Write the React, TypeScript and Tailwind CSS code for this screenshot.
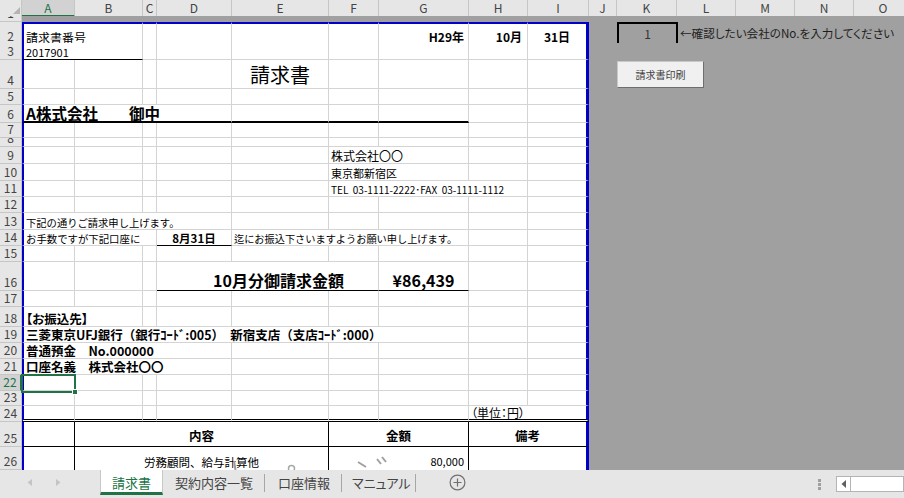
import React from "react";

type BT = "g" | "n" | "k" | "k2" | "dbl";
type RT = "g" | "n" | "k";
interface Spec {
  s?: number;
  r?: RT;
  b?: BT;
  t?: string;
  cls?: string;
  c?: React.ReactNode;
  sel?: boolean;
}

const SPAN: Record<number, string> = {
  1: "",
  2: "col-span-2",
  3: "col-span-3",
  4: "col-span-4",
  5: "col-span-5",
  6: "col-span-6",
  7: "col-span-7",
  8: "col-span-8",
  9: "col-span-9",
};
const RCL: Record<string, string> = {
  g: "border-r border-r-[#d4d4d4]",
  n: "",
  k: "border-r border-r-black",
  blue: "border-r-[3px] border-r-[#0000c8]",
};
const BCL: Record<string, string> = {
  g: "border-b border-b-[#d4d4d4]",
  n: "",
  k: "border-b border-b-black",
  k2: "border-b-2 border-b-black",
  dbl: "border-b-[3px] border-b-black [border-bottom-style:double]",
};

const GRID =
  "grid grid-cols-[22px_53px_68px_14px_75px_97px_50px_90px_59px_61px_28px_60px_59px_59px_59px_59px]";

const e = (n: number, extra: Spec = {}): Spec[] =>
  Array.from({ length: n }, () => ({ ...extra }));

function RowHead({ n, sel }: { n: number; sel?: boolean }) {
  return (
    <div
      className={
        sel
          ? "flex items-end justify-center overflow-hidden border-b border-b-[#c6c6c6] border-r-2 border-r-[#217346] bg-[#d2d2d2] pb-[2px] text-[12px] leading-none text-[#217346]"
          : "flex items-end justify-center overflow-hidden border-b border-r border-[#c6c6c6] bg-[#e6e6e6] pb-[2px] text-[12px] leading-none text-[#444]"
      }
    >
      {n}
    </div>
  );
}

function Selection() {
  return (
    <div className="pointer-events-none absolute -left-[3px] -top-[1px] h-[19px] w-[55px] border-2 border-[#217346]">
      <div className="absolute -bottom-[4px] -right-[4px] h-[6px] w-[6px] border border-white bg-[#217346]" />
    </div>
  );
}

function SheetRow({
  n,
  h,
  cells,
  top,
  sel,
  right,
  overlay,
}: {
  n: number;
  h: string;
  cells: Spec[];
  top?: boolean;
  sel?: boolean;
  right?: React.ReactNode;
  overlay?: React.ReactNode;
}) {
  return (
    <div className={`${GRID} ${h} relative`}>
      <RowHead n={n} sel={sel} />
      {cells.map((c, i) => {
        const last = i === cells.length - 1;
        const cls = [
          "flex min-w-0 items-end whitespace-nowrap bg-white px-[2px] leading-none text-black",
          SPAN[c.s ?? 1],
          last ? RCL.blue : RCL[c.r ?? "g"],
          BCL[c.b ?? "g"],
          i === 0 ? "border-l-2 border-l-[#0000c8]" : "",
          top ? "border-t-2 border-t-[#0000c8]" : "",
          c.t ?? "text-[12px]",
          c.sel ? "relative z-10" : "",
          c.cls ?? "pb-[1px]",
        ].join(" ");
        return (
          <div key={i} className={cls}>
            {c.c}
            {c.sel && <Selection />}
          </div>
        );
      })}
      <div className="col-span-6 flex bg-[#a0a0a0]">{right}</div>
      {overlay}
    </div>
  );
}

const COLS = ["A", "B", "C", "D", "E", "F", "G", "H", "I", "J", "K", "L", "M", "N", "O"];

function HeaderRow() {
  return (
    <div className={`${GRID} h-[16px]`}>
      <div className="border-b border-r border-[#c6c6c6] bg-[#e6e6e6]">
        <svg width="22" height="16" viewBox="0 0 22 16">
          <path d="M20 7 L20 14 L13 14 Z" fill="#b4b4b4" />
        </svg>
      </div>
      {COLS.map((c, i) =>
        i === 0 ? (
          <div
            key={c}
            className="flex items-center justify-center border-b-2 border-b-[#217346] border-r border-r-[#c6c6c6] bg-[#d2d2d2] text-[12px] leading-none text-[#217346]"
          >
            {c}
          </div>
        ) : (
          <div
            key={c}
            className="flex items-center justify-center border-b border-r border-[#c6c6c6] bg-[#e6e6e6] text-[12px] leading-none text-[#444]"
          >
            {c}
          </div>
        )
      )}
    </div>
  );
}

function TabBar() {
  return (
    <div className="flex h-[28px] items-start bg-[#e6e6e6] text-[13px] leading-none [font-feature-settings:'palt']">
      <div className="flex h-[25px] w-[100px] items-center">
        <svg width="100" height="25" viewBox="0 0 100 25">
          <path d="M32 9 L27.5 12.5 L32 16 Z" fill="#c4c4c4" />
          <path d="M56 9 L60.5 12.5 L56 16 Z" fill="#c4c4c4" />
        </svg>
      </div>
      <div className="flex h-[25px] w-[63px] items-center justify-center border-x border-x-[#c8c8c8] border-b-[3px] border-b-[#217346] bg-white pt-[2px] text-[#217346]">
        請求書
      </div>
      <div className="flex h-[25px] items-center text-[#444]">
        <span className="w-[101px] whitespace-nowrap pl-[12px]">契約内容一覧</span>
        <span className="h-[18px] w-px bg-[#a6a6a6]" />
        <span className="w-[76px] whitespace-nowrap pl-[13px]">口座情報</span>
        <span className="h-[18px] w-px bg-[#a6a6a6]" />
        <span className="w-[73px] whitespace-nowrap pl-[10px]">マニュアル</span>
        <span className="h-[18px] w-px bg-[#a6a6a6]" />
        <svg className="ml-[33px]" width="17" height="17" viewBox="0 0 17 17">
          <circle cx="8.5" cy="8.5" r="7.4" fill="none" stroke="#707070" strokeWidth="1.2" />
          <path d="M8.5 4.5v8M4.5 8.5h8" stroke="#707070" strokeWidth="1.2" />
        </svg>
      </div>
      <div className="ml-auto flex h-[28px] items-center">
        <div className="flex flex-col gap-[1px]">
          <span className="h-[3px] w-[3px] bg-[#a0a0a0]" />
          <span className="h-[3px] w-[3px] bg-[#a0a0a0]" />
          <span className="h-[3px] w-[3px] bg-[#a0a0a0]" />
        </div>
        <div className="ml-[15px] flex h-[16px] w-[68px] border border-[#b4b4b4] bg-white">
          <div className="flex w-[14px] items-center justify-center border-r border-r-[#b4b4b4]">
            <svg width="6" height="8" viewBox="0 0 6 8">
              <path d="M5 0 L0.5 4 L5 8 Z" fill="#606060" />
            </svg>
          </div>
        </div>
      </div>
    </div>
  );
}

const PALT = "[font-feature-settings:'palt']";

export default function App() {
  return (
    <div className="relative h-[498px] w-[904px] overflow-hidden bg-white [font-family:'Noto_Sans_CJK_JP',sans-serif]">
      <div className="h-[470px] overflow-hidden">
        <HeaderRow />
        {/* row 1 */}
        <div className={`${GRID} h-[6px]`}>
          <RowHead n={1} />
          <div className="col-span-15 bg-[#a0a0a0]" />
        </div>
        <SheetRow
          n={2}
          h="h-[21px]"
          top
          cells={[
            { s: 2, c: "請求書番号", cls: "pb-0" },
            ...e(4),
            { b: "k", cls: "justify-end pr-[4px] font-bold pb-[1px]", c: "H29年" },
            { b: "k", cls: "justify-end pr-[5px] font-bold pb-[1px]", c: "10月" },
            { b: "k", cls: "justify-center font-bold pb-[1px]", c: "31日" },
          ]}
          right={
            <div className="flex items-center pl-[28px]">
              <div className="flex h-[23px] w-[61px] shrink-0 items-center justify-center border-2 border-black text-[12px] text-[#333]">
                1
              </div>
              <span className={`ml-[2px] whitespace-nowrap text-[11.6px] text-[#1e1e1e] ${PALT}`}>
                ←確認したい会社のNo.を入力してください
              </span>
            </div>
          }
        />
        <SheetRow
          n={3}
          h="h-[17px]"
          cells={[{ s: 2, b: "k", t: "text-[11px]", c: "2017901" }, ...e(7)]}
        />
        <SheetRow
          n={4}
          h="h-[29px]"
          cells={[
            ...e(4),
            { t: "text-[20px]", cls: "justify-center pb-[3px]", c: "請求書" },
            ...e(4),
          ]}
          right={
            <div className="pl-[28px] pt-[1px]">
              <button className="flex h-[27px] w-[87px] items-center justify-center border border-[#c8c8c8] border-b-[#6e6e6e] border-r-[#6e6e6e] bg-[#f0f0f0] text-[10px] text-[#404040]">
                請求書印刷
              </button>
            </div>
          }
        />
        <SheetRow n={5} h="h-[16px]" cells={e(9)} />
        <SheetRow
          n={6}
          h="h-[18px]"
          cells={[
            { s: 4, b: "k2", t: "text-[15.5px]", cls: "font-bold pb-0", c: "A株式会社　　御中" },
            ...e(3, { b: "k2" }),
            ...e(2),
          ]}
        />
        <SheetRow n={7} h="h-[15px]" cells={e(9)} />
        <SheetRow n={8} h="h-[9px]" cells={e(9)} />
        <SheetRow
          n={9}
          h="h-[17px]"
          cells={[...e(5), { s: 2, t: "text-[12px]", c: "株式会社〇〇" }, ...e(2)]}
        />
        <SheetRow
          n={10}
          h="h-[17px]"
          cells={[...e(5), { s: 2, t: "text-[11px]", c: "東京都新宿区" }, ...e(2)]}
        />
        <SheetRow
          n={11}
          h="h-[16px]"
          cells={[
            ...e(5),
            { s: 3, t: "text-[10px]", c: "TEL\u00a0\u00a003-1111-2222･FAX\u00a0\u00a003-1111-1112" },
            ...e(1),
          ]}
        />
        <SheetRow n={12} h="h-[16px]" cells={e(9)} />
        <SheetRow
          n={13}
          h="h-[17px]"
          cells={[{ s: 4, t: "text-[10.3px]", c: "下記の通りご請求申し上げます。" }, ...e(5)]}
        />
        <SheetRow
          n={14}
          h="h-[16px]"
          cells={[
            { s: 3, t: "text-[10.4px]", c: "お手数ですが下記口座に" },
            { b: "k", t: "text-[11.5px]", cls: "justify-center font-bold pb-[1px]", c: "8月31日" },
            { s: 3, t: "text-[10.2px]", c: "迄にお振込下さいますようお願い申し上げます。" },
            ...e(2),
          ]}
        />
        <SheetRow n={15} h="h-[16px]" cells={e(9)} />
        <SheetRow
          n={16}
          h="h-[29px]"
          cells={[
            ...e(3),
            { s: 3, b: "k", t: "text-[16px]", cls: "justify-center pl-[24px] font-bold pb-[2px]", c: "10月分御請求金額" },
            { b: "k", t: "text-[16px]", cls: "justify-center font-bold pb-[2px]", c: "¥86,439" },
            ...e(2),
          ]}
        />
        <SheetRow n={17} h="h-[16px]" cells={e(9)} />
        <SheetRow
          n={18}
          h="h-[20px]"
          cells={[{ s: 2, t: "text-[12.5px]", cls: `font-bold pb-[1px] ${PALT}`, c: "【お振込先】" }, ...e(7)]}
        />
        <SheetRow
          n={19}
          h="h-[16px]"
          cells={[
            {
              s: 7,
              t: "text-[12.5px]",
              cls: "font-bold pb-[1px]",
              c: "三菱東京UFJ銀行（銀行ｺｰﾄﾞ:005）　新宿支店（支店ｺｰﾄﾞ:000）",
            },
            ...e(2),
          ]}
        />
        <SheetRow
          n={20}
          h="h-[16px]"
          cells={[{ s: 4, t: "text-[12.5px]", cls: "font-bold pb-[1px]", c: "普通預金　No.000000" }, ...e(5)]}
        />
        <SheetRow
          n={21}
          h="h-[16px]"
          cells={[{ s: 4, t: "text-[12.5px]", cls: "font-bold pb-[1px]", c: "口座名義　株式会社〇〇" }, ...e(5)]}
        />
        <SheetRow n={22} h="h-[16px]" sel cells={[{ sel: true }, ...e(8)]} />
        <SheetRow n={23} h="h-[15px]" cells={e(9)} />
        <SheetRow
          n={24}
          h="h-[16px]"
          cells={[
            ...e(7, { b: "dbl" }),
            { s: 2, b: "dbl", t: "text-[12px]", cls: `px-0 pb-0 ${PALT}`, c: "（単位：円）" },
          ]}
        />
        <SheetRow
          n={25}
          h="h-[25px]"
          cells={[
            { r: "k", b: "k" },
            { s: 4, r: "k", b: "k", t: "text-[12.5px]", cls: "justify-center font-bold pb-[4px]", c: "内容" },
            { s: 2, r: "k", b: "k", t: "text-[12.5px]", cls: "justify-center font-bold pb-[4px]", c: "金額" },
            { s: 2, b: "k", t: "text-[12.5px]", cls: "justify-center font-bold pb-[4px]", c: "備考" },
          ]}
        />
        <SheetRow
          n={26}
          h="h-[23px]"
          cells={[
            { r: "k", b: "n" },
            { s: 4, r: "k", b: "n", t: "text-[11.5px]", cls: "justify-center pb-[2px]", c: "労務顧問、給与計算他" },
            { s: 2, r: "k", b: "n", t: "text-[11px]", cls: "justify-end pr-[4px] pb-[3px]", c: "80,000" },
            { s: 2, b: "n" },
          ]}
          overlay={
            <svg
              className="pointer-events-none absolute left-0 top-0"
              width="600"
              height="23"
              viewBox="0 0 600 23"
            >
              <path d="M234 14 L235.5 23" stroke="#9c9c9c" strokeWidth="2" />
              <circle cx="291.5" cy="21.5" r="3" fill="none" stroke="#a8a8a8" strokeWidth="1.5" />
              <path d="M358 15 L366 20" stroke="#a0a0a0" strokeWidth="2" />
              <path d="M377 12 L381 17 M382 10 L386 15" stroke="#a0a0a0" strokeWidth="2" />
            </svg>
          }
        />
      </div>
      <TabBar />
    </div>
  );
}
